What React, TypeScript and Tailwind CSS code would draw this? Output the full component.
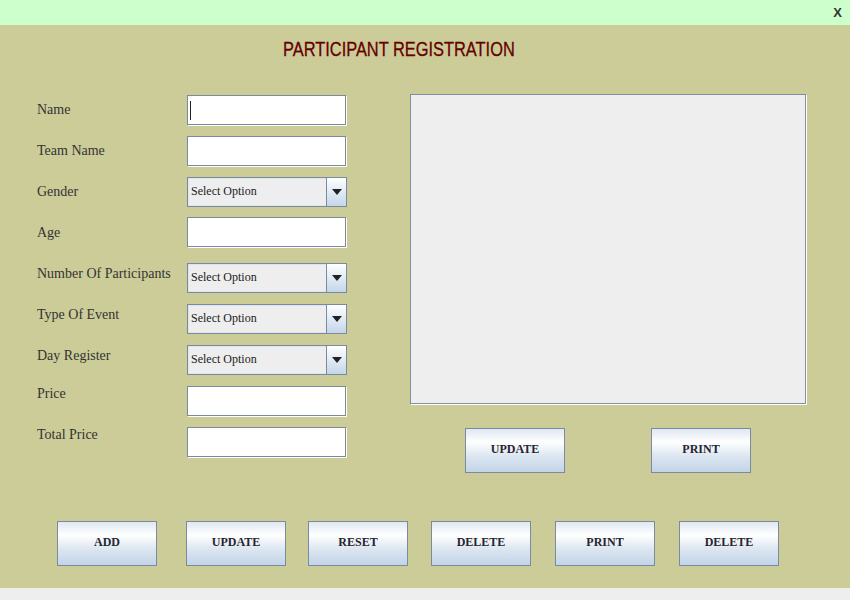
import { useState } from "react";

const labels = [
  { text: "Name", cls: "" },
  { text: "Team Name", cls: "" },
  { text: "Gender", cls: "" },
  { text: "Age", cls: "" },
  { text: "Number Of Participants", cls: "" },
  { text: "Type Of Event", cls: "" },
  { text: "Day Register", cls: "" },
  { text: "Price", cls: "-mt-[3px]" },
  { text: "Total Price", cls: "" },
];

function TextField({ caret = false, className = "" }: { caret?: boolean; className?: string }) {
  return (
    <div
      className={`h-[30px] w-[159px] bg-white border border-[#7d8a9c] shadow-[1px_1px_0_#ffffff] flex items-center pl-[2px] ${className}`}
    >
      {caret && <span className="w-px h-[19px] bg-[#222]" />}
      <input className="flex-1 min-w-0 h-full bg-transparent outline-none text-[12px]" />
    </div>
  );
}

function SelectField({ className = "" }: { className?: string }) {
  return (
    <div className={`h-[30px] w-[160px] border border-[#7a8aa0] flex ${className}`}>
      <div className="flex-1 bg-[#eeeeee] border border-[#dce4ee] border-r-0 flex items-center pl-[2px] pb-[2px] text-[12px] text-[#222] leading-none">
        Select Option
      </div>
      <div className="w-[20px] border-l border-[#7a8aa0] bg-gradient-to-b from-white to-[#c4d6ea] flex items-center justify-center">
        <svg width="10" height="6" viewBox="0 0 10 6">
          <path d="M0 0h10L5 6z" fill="#222" />
        </svg>
      </div>
    </div>
  );
}

function Btn({ label, className = "" }: { label: string; className?: string }) {
  return (
    <button
      className={`w-[100px] h-[45px] pb-[3px] border border-[#7a8aa0] bg-[linear-gradient(to_bottom,#dfe7f1_0%,#ffffff_30%,#dae5f0_65%,#c3d4e8_100%)] text-[12px] font-bold text-[#25252f] ${className}`}
    >
      {label}
    </button>
  );
}

export default function App() {
  const [note] = useState("");
  return (
    <div className="w-[850px] h-[600px] flex flex-col font-['Liberation_Serif',serif] overflow-hidden">
      {/* title bar */}
      <div className="h-[25px] bg-[#ccffcc] flex justify-end items-center pr-[8px]">
        <span className="font-['Liberation_Sans',sans-serif] font-bold text-[13px] text-[#333] leading-none">X</span>
      </div>

      {/* main panel */}
      <div className="h-[563px] bg-[#cccc99] flex flex-col">
        <div className="pl-[283px] pt-[13px] h-[34px]">
          <span className="inline-block origin-left scale-x-[0.8] font-['Liberation_Sans',sans-serif] text-[20.5px] leading-[22px] text-[#660000] whitespace-nowrap [-webkit-text-stroke:0.3px_#660000]">
            PARTICIPANT REGISTRATION
          </span>
        </div>

        <div className="flex items-start mt-[36px]">
          {/* labels */}
          <div className="w-[150px] ml-[37px] pt-[5px] flex flex-col text-[14px] text-[#333]">
            {labels.map((l) => (
              <div key={l.text} className={`h-[41px] leading-[20px] whitespace-nowrap ${l.cls}`}>
                {l.text}
              </div>
            ))}
          </div>

          {/* fields */}
          <div className="w-[160px] flex flex-col">
            <TextField caret />
            <TextField className="mt-[11px]" />
            <SelectField className="mt-[11px]" />
            <TextField className="mt-[10px]" />
            <SelectField className="mt-[16px]" />
            <SelectField className="mt-[11px]" />
            <SelectField className="mt-[11px]" />
            <TextField className="mt-[11px]" />
            <TextField className="mt-[11px]" />
          </div>

          {/* preview area */}
          <div className="ml-[63px] -mt-px flex flex-col">
            <div className="w-[396px] h-[310px] bg-[#eeeeee] border border-[#8090a0] shadow-[1px_1px_0_#ffffff]">
              {note}
            </div>
            <div className="flex mt-[24px]">
              <Btn label="UPDATE" className="ml-[55px]" />
              <Btn label="PRINT" className="ml-[86px]" />
            </div>
          </div>
        </div>

        <div className="flex mt-[48px]">
          <Btn label="ADD" className="ml-[57px]" />
          <Btn label="UPDATE" className="ml-[29px]" />
          <Btn label="RESET" className="ml-[22px]" />
          <Btn label="DELETE" className="ml-[23px]" />
          <Btn label="PRINT" className="ml-[24px]" />
          <Btn label="DELETE" className="ml-[24px]" />
        </div>
      </div>

      <div className="flex-1 bg-[#eeeeee]" />
    </div>
  );
}
